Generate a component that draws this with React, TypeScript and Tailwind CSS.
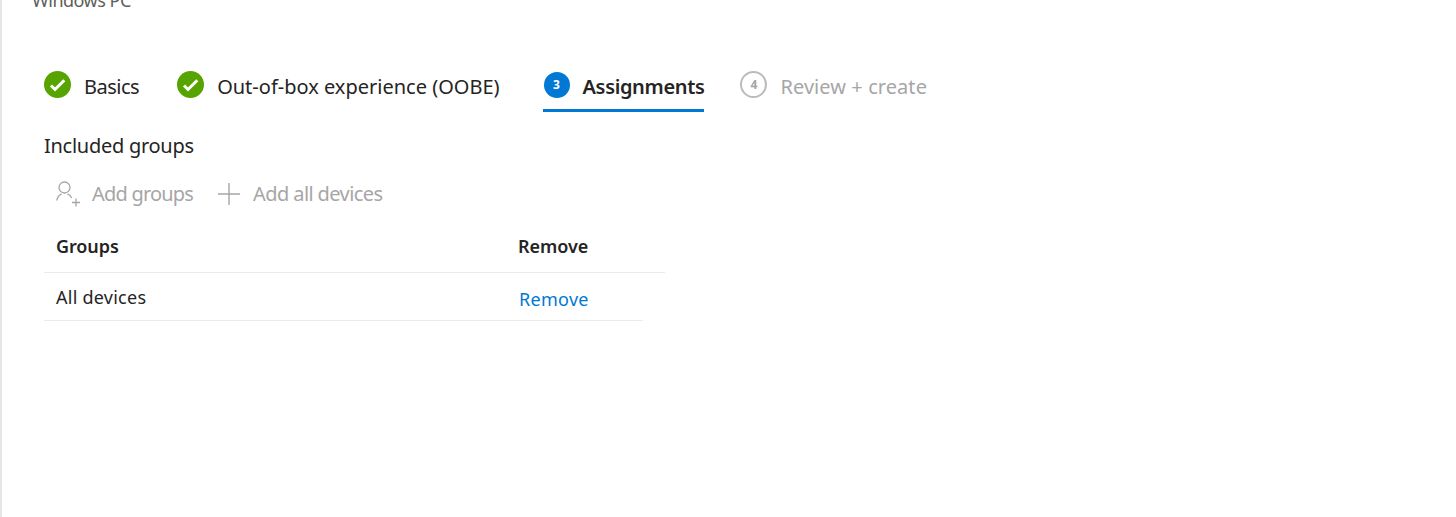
import React from "react";

function Check() {
  return (
    <svg width="27" height="27" viewBox="0 0 27 27" className="shrink-0">
      <circle cx="13.5" cy="13.5" r="13.5" fill="#57a300" />
      <path d="M7 14.500l4 4 9.300-9.300" fill="none" stroke="#fff" strokeWidth="3" />
    </svg>
  );
}

function Step({ label, check, n, state, gap, mr, track }: { label: string; check?: boolean; n?: number; state?: string; gap: string; mr: string; track: string }) {
  return (
    <div className={`flex h-[41px] items-start ${mr} ${state === "active" ? "border-b-[3px] border-[#0078d4] pl-[1px]" : ""}`}>
      <div className={`flex items-start ${gap}`}>
        {check && <Check />}
        {state === "active" && (
          <div className="mt-[1px] flex h-[26px] w-[26px] items-center justify-center rounded-full bg-[#0078d4] text-[12px] font-bold leading-none text-white">{n}</div>
        )}
        {state === "todo" && (
          <div className="flex h-[27px] w-[27px] items-center justify-center rounded-full border-2 border-[#bbbbbb] text-[12px] font-bold leading-none text-[#a6a6a6]">{n}</div>
        )}
        <span className={`mt-[1px] text-[20px] leading-[30px] ${track} ${state === "active" ? "font-semibold text-[#252423]" : state === "todo" ? "text-[#a6a6a6]" : "text-[#252423]"}`}>{label}</span>
      </div>
    </div>
  );
}

export default function App() {
  return (
    <div className="h-[517px] w-[1456px] overflow-hidden border-l-2 border-[#e6e6e6] bg-white font-['Noto_Sans','Open_Sans',sans-serif]">
      <div className="-mt-[12px] pl-[30px] text-[18px] leading-[24px] tracking-[-0.5px] text-[#605e5c]">Windows PC</div>
      <div className="ml-[42px] mt-[59px] flex items-start">
        <Step label="Basics" check gap="gap-[13px]" mr="mr-[38px]" track="tracking-[-0.5px]" />
        <Step label="Out-of-box experience (OOBE)" check gap="gap-[13px]" mr="mr-[43px]" track="tracking-[0px]" />
        <Step label="Assignments" n={3} state="active" gap="gap-[13px]" mr="mr-[36px]" track="tracking-[-0.35px]" />
        <Step label="Review + create" n={4} state="todo" gap="gap-[13px]" mr="" track="tracking-[0.07px]" />
      </div>
      <div className="ml-[42px] mt-[19px] text-[20px] leading-[30px] tracking-[-0.27px] text-[#252423]">Included groups</div>
      <div className="ml-[54px] mt-[19px] flex h-[28px] items-center text-[20px] text-[#a6a6a6]">
        <svg width="26" height="27" viewBox="0 0 26 27" fill="none" stroke="#a6a6a6" strokeWidth="1.3" className="mr-[10px]">
          <circle cx="8.500" cy="6.500" r="5.500" />
          <path d="M0.800 19.500c.4-3 2.400-5.400 4.800-6.600" />
          <path d="M11.500 12.900c1.900.9 3.300 2.300 4.200 4.100" />
          <path d="M16 21.500h8M20 17.500v8" />
        </svg>
        <span className="mr-[24px] tracking-[-0.8px]">Add groups</span>
        <svg width="24" height="24" viewBox="0 0 24 24" fill="none" stroke="#a6a6a6" strokeWidth="1.4" className="mr-[12px]">
          <path d="M12 1v22M1 12h22" />
        </svg>
        <span className="tracking-[-0.6px]">Add all devices</span>
      </div>
      <div className="ml-[42px] mt-[25px] w-[621px]">
        <div className="flex h-[40px] items-center border-b border-[#edebe9] pb-[12px] pl-[12px] text-[18px] font-semibold text-[#252423]">
          <span className="w-[462px] tracking-[-0.1px]">Groups</span>
          <span className="tracking-[-0.05px]">Remove</span>
        </div>
        <div className="flex h-[48px] w-[599px] items-center border-b border-[#edebe9] pl-[12px] text-[18px] text-[#252423]">
          <span className="mt-[2px] w-[463px] tracking-[0.25px]">All devices</span>
          <span className="mt-[6px] tracking-[0.3px] text-[#0078d4]">Remove</span>
        </div>
      </div>
    </div>
  );
}
